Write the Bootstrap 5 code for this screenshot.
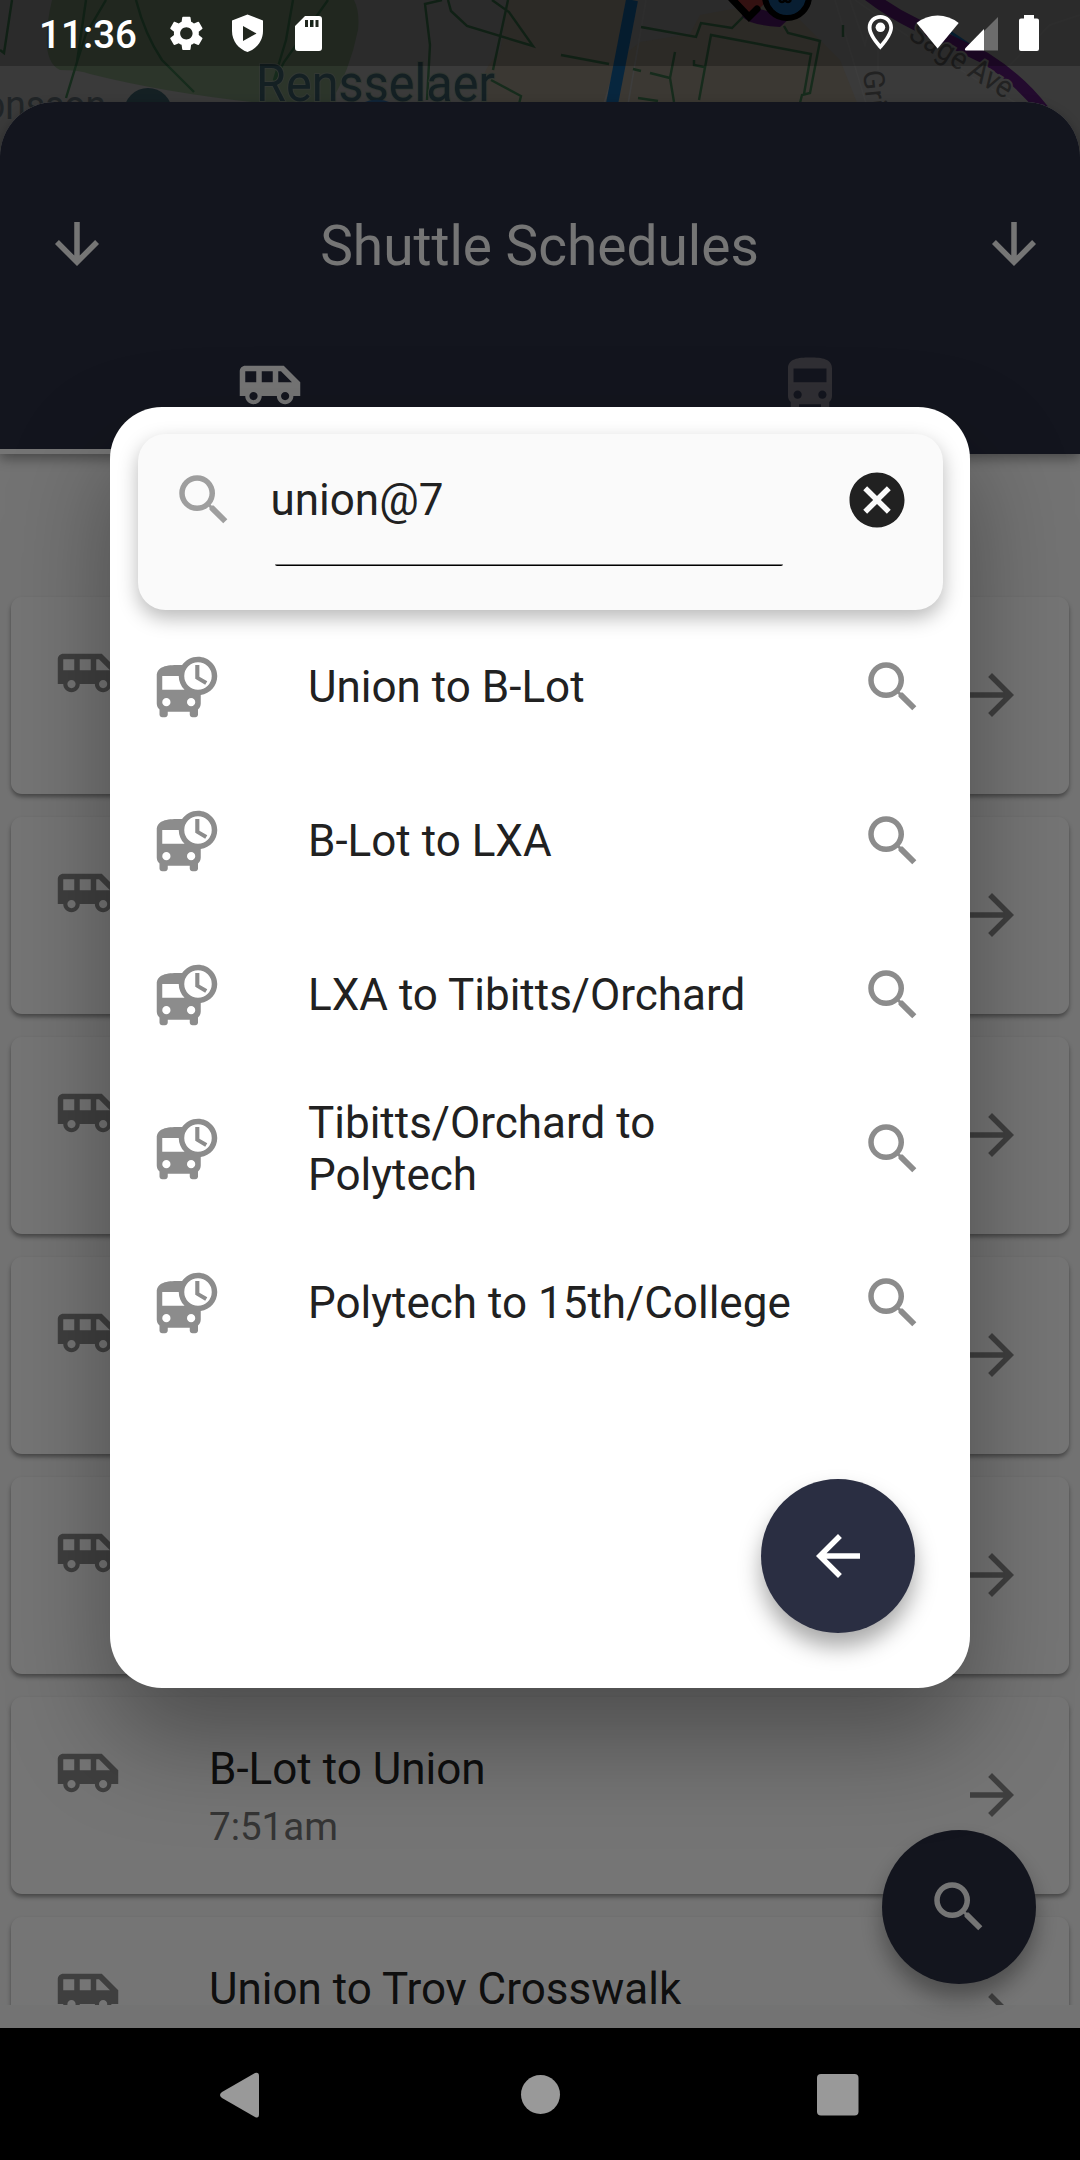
<!DOCTYPE html>
<html lang="en">
<head>
<meta charset="utf-8">
<meta name="viewport" content="width=device-width, initial-scale=1">
<title>Shuttle Schedules</title>
<link href="https://cdn.jsdelivr.net/npm/bootstrap@5.3.0/dist/css/bootstrap.min.css" rel="stylesheet">
<style>
body{font-family:Roboto,"Liberation Sans",sans-serif;background:#000;overflow:hidden;color:#212121}
.phone{width:1080px;height:2160px}
.screen{height:2028px;background:#fafafa}
.ico{width:66px;height:66px;fill:currentColor;flex:none;display:block}
.map-strip{height:160px;flex:none;display:block}
.map-strip text{font-family:Roboto,sans-serif}
.sheet{margin-top:-58.5px;background:#fafafa;border-radius:55px 55px 0 0}
.sheet-head{height:352px;padding-top:65.5px;background:#2a2f42;border-radius:55px 55px 0 0;box-shadow:0 5px 12px rgba(0,0,0,.35);color:#fff;flex:none}
.title-bar{height:154px;padding:0 33px 0 44px}
.title-text{font-size:55px;line-height:64px;padding-top:3px;margin-right:12px}
.tab-cell{height:132.5px;padding-bottom:0;border-bottom:5.5px solid transparent}
.tab-on{border-color:#fff}
.tab-off{color:#6a6771}
.stops{padding:143px 11px 0;gap:22.5px;height:1551px}
.stop{height:197.5px;flex:none;border-radius:11px;background:#fff;box-shadow:0 3px 4px rgba(0,0,0,.38);padding:43.5px 44px 0}
.stop .ico{color:#8a8a8a}
.stop-text{padding-left:88px}
.stop-name{font-size:44px;line-height:52px;margin-top:2.5px;color:#212121}
.stop-time{font-size:38.5px;line-height:45px;margin-top:9px;color:#737373}
.stop .go{margin-top:22px}
.round-btn{width:154px;height:154px;background:#2a2e42;color:#fff;box-shadow:0 14px 22px rgba(0,0,0,.34)}
.find-btn{right:44px;bottom:44px}
.veil{background:rgba(0,0,0,.54);padding:66px 110px 0;height:2028px;z-index:2}
.dialog-box{height:1281px;margin-top:340.5px;background:#fff;border-radius:52px;box-shadow:0 50px 100px rgba(0,0,0,.34);padding:27.5px 0 55px}
.search-card{height:176px;margin:0 27.5px;flex:none;background:#fafafa;border-radius:27.5px;box-shadow:0 8px 20px rgba(0,0,0,.28);padding:33px 33px 0}
.search-card .lens{color:#9e9e9e}
.field{margin:0 60px 0 34px}
.field-text{font-size:44px;line-height:66px;color:#212121}
.field-line{height:2px;margin:31px 1px 0 4px;background:linear-gradient(#777 50%,#000 50%);border-radius:0 0 4px 4px}
.hit{height:154px;padding:0 44px;color:#8c8c8c}
.hit-name{font-size:44px;line-height:52px;color:#212121;padding-left:88px;padding-right:44px}
.back-btn{margin-right:55px}
.status{height:66px;background:rgba(0,0,0,.25);z-index:3}
.clock-text{font-size:38.5px;font-weight:500;fill:#fff;font-family:Roboto,sans-serif}
.navkeys{height:132px;background:#000}
</style>
</head>
<body>
<svg class="d-none" xmlns="http://www.w3.org/2000/svg">
<symbol id="van" viewBox="0 0 24 24"><path d="M17 5H3c-1.1 0-2 .89-2 2v9h2c0 1.65 1.34 3 3 3s3-1.35 3-3h5.5c0 1.65 1.34 3 3 3s3-1.35 3-3H23v-5l-6-6zM3 11V7h4v4H3zm3 6.5c-.83 0-1.5-.67-1.5-1.5s.67-1.5 1.5-1.5 1.5.67 1.5 1.5-.67 1.5-1.5 1.5zm7-6.5H9V7h4v4zm4.5 6.5c-.83 0-1.5-.67-1.5-1.5s.67-1.5 1.5-1.5 1.5.67 1.5 1.5-.67 1.5-1.5 1.5zM15 11V7h1l4 4h-5z"/></symbol>
<symbol id="bus" viewBox="0 0 24 24"><path d="M4 16c0 .88.39 1.67 1 2.22V20c0 .55.45 1 1 1h1c.55 0 1-.45 1-1v-1h8v1c0 .55.45 1 1 1h1c.55 0 1-.45 1-1v-1.78c.61-.55 1-1.34 1-2.22V6c0-3.5-3.58-4-8-4s-8 .5-8 4v10zm3.500 1c-.83 0-1.500-.67-1.500-1.500S6.670 14 7.500 14s1.500.67 1.500 1.500S8.330 17 7.500 17zm9 0c-.83 0-1.500-.67-1.500-1.500s.67-1.500 1.500-1.500 1.500.67 1.500 1.500-.67 1.500-1.500 1.500zm1.500-6H6V6h12v5z"/></symbol>
<symbol id="board" viewBox="0 0 24 24"><path fill-rule="evenodd" d="M16 1c-2.400 0-4.520 1.210-5.780 3.020C9.840 4 9.420 4 9 4c-4.420 0-8 .5-8 4v10c0 .88.39 1.67 1 2.22V22c0 .55.45 1 1 1h1c.55 0 1-.45 1-1v-1h8v1c0 .55.45 1 1 1h1c.55 0 1-.45 1-1v-1.780c.61-.55 1-1.340 1-2.220v-3.080c3.390-.49 6-3.390 6-6.920 0-3.870-3.130-7-7-7zM4.500 19a1.500 1.500 0 1 1 0-3 1.500 1.500 0 0 1 0 3zM3 13V8h6c0 1.960.81 3.730 2.110 5H3zm10.500 6a1.500 1.500 0 1 1 0-3 1.500 1.500 0 0 1 0 3zM16 13a5 5 0 1 1 0-10 5 5 0 0 1 0 10zM16.500 4H15v5l3.620 2.160.75-1.230-2.870-1.680V4z"/></symbol>
<symbol id="lens" viewBox="0 0 24 24"><path d="M15.500 14h-.79l-.28-.27A6.471 6.471 0 0 0 16 9.500 6.500 6.500 0 1 0 9.500 16c1.610 0 3.090-.59 4.230-1.570l.27.28v.79l5 4.990L20.490 19l-4.990-5zm-6 0C7.010 14 5 11.990 5 9.500S7.010 5 9.500 5 14 7.010 14 9.500 11.990 14 9.500 14z"/></symbol>
<symbol id="down" viewBox="0 0 24 24"><path d="M20 12l-1.410-1.410L13 16.170V4h-2v12.170l-5.580-5.590L4 12l8 8 8-8z"/></symbol>
<symbol id="next" viewBox="0 0 24 24"><path d="M12 4l-1.410 1.410L16.170 11H4v2h12.170l-5.580 5.590L12 20l8-8z"/></symbol>
<symbol id="back" viewBox="0 0 24 24"><path d="M20 11H7.830l5.590-5.590L12 4l-8 8 8 8 1.410-1.410L7.830 13H20v-2z"/></symbol>
<symbol id="clear" viewBox="0 0 24 24"><path d="M12 2C6.470 2 2 6.470 2 12s4.470 10 10 10 10-4.470 10-10S17.530 2 12 2zm5 13.590L15.590 17 12 13.410 8.410 17 7 15.590 10.590 12 7 8.410 8.410 7 12 10.590 15.590 7 17 8.410 13.410 12 17 15.590z"/></symbol>
</svg>

<div class="phone position-relative d-flex flex-column">
  <div class="screen position-relative d-flex flex-column overflow-hidden">
    <svg class="map-strip" width="1080" height="160" viewBox="0 0 1080 160">
      <rect width="1080" height="160" fill="#7e7e7e"/>
      <path d="M52 0Q38 60 60 70Q80 70 90 74Q170 94 270 104H330Q350 70 358 30Q360 12 354 0z" fill="#60735d"/>
      <path d="M508 0H626L606 110H490Q470 80 500 52zM700 15L780 0 840 60 860 110H606L618 60 640 42 690 34z" fill="#807a6f"/>
      <path d="M630 20L602 110M646 0L627 110M835 0L868 110M850 0l15 45 5-20M878 20v50M855 0Q940 60 1018 104M1000 75L1050 25 1080 15" fill="none" stroke="#868686" stroke-width="1.500"/>
      <g fill="none" stroke="#305e3d" stroke-width="2.400">
        <path d="M12 0L4 53l-4-3M86 0L77 62 66 98M106 0L86 34 77 62M136 0Q145 35 162 60L194 92M293 0L286 40 274 80M328 0L284 62 272 86M442 0L425 4 430 45 427 100M448 0l3 11 16 15 66 20L509 12 492 0M508 0L493 70M491 80l30 16-2 8M561 55l48 9M641 27l55 10 5-14 31 5 12-12M675 52l-5 26 4 24M694 60v5l10 2M633 69l8 2M650 73l20 5M638 98l20 3M699 100l12-65 100 19-7 40M784 26l4 7 32 8-10 52-8 2-2 8M843 25v12"/>
      </g>
      <path d="M632 0L612 104" stroke="#115387" stroke-width="12" fill="none"/>
      <path d="M944 28l30 20" stroke="#115387" stroke-width="3"/>
      <path d="M867-6Q890 12 915 24L985 58Q1020 80 1043 110" stroke="#4c1664" stroke-width="12" fill="none"/>
      <path d="M742 16Q748 25 780 27L790 18 750 6z" fill="#4c1664"/>
      <path d="M732 0L749 17 759 9 768 0z" fill="#953333"/>
      <path d="M731-2L749 17 757 9" fill="none" stroke="#000" stroke-width="7" stroke-linecap="round"/>
      <circle cx="787" cy="-4" r="22" fill="#1a5a93" stroke="#000" stroke-width="6"/>
      <path d="M779 0q3 4 6 0q3 4 6 0" stroke="#000" stroke-width="2.500" fill="none"/>
      <circle cx="148" cy="112" r="24" fill="#2c464e"/>
      <text x="256" y="101" font-size="51.500" fill="#2c464e" stroke="#6f7b6f" stroke-width="2" paint-order="stroke" textLength="239" lengthAdjust="spacingAndGlyphs">Rensselaer</text>
      <text x="-16" y="119" font-size="41" fill="#475055" textLength="122" lengthAdjust="spacingAndGlyphs">onsson</text>
      <text font-size="31" fill="#4a4a4a" stroke="#7e7e7e" stroke-width="4" paint-order="stroke" transform="translate(907 38) rotate(32)" textLength="116" lengthAdjust="spacingAndGlyphs">Sage Ave</text>
      <text font-size="29" fill="#4a4a4a" transform="translate(863 71) rotate(84)">Griswold</text>
      <path d="M362 103q15-7 30 0z" fill="#24507c"/>
    </svg>
    <div class="sheet position-relative d-flex flex-column">
      <header class="sheet-head position-relative z-1">
        <div class="title-bar d-flex align-items-center justify-content-between">
          <svg class="ico"><use href="#down"/></svg>
          <div class="title-text">Shuttle Schedules</div>
          <svg class="ico"><use href="#down"/></svg>
        </div>
        <div class="row g-0">
          <div class="col-6 tab-cell tab-on d-flex justify-content-center align-items-center"><svg class="ico"><use href="#van"/></svg></div>
          <div class="col-6 tab-cell tab-off d-flex justify-content-center align-items-center"><svg class="ico"><use href="#bus"/></svg></div>
        </div>
      </header>
      <main class="stops d-flex flex-column overflow-hidden">
        <div class="stop d-flex align-items-start"><svg class="ico"><use href="#van"/></svg><svg class="ico go ms-auto"><use href="#next"/></svg></div>
        <div class="stop d-flex align-items-start"><svg class="ico"><use href="#van"/></svg><svg class="ico go ms-auto"><use href="#next"/></svg></div>
        <div class="stop d-flex align-items-start"><svg class="ico"><use href="#van"/></svg><svg class="ico go ms-auto"><use href="#next"/></svg></div>
        <div class="stop d-flex align-items-start"><svg class="ico"><use href="#van"/></svg><svg class="ico go ms-auto"><use href="#next"/></svg></div>
        <div class="stop d-flex align-items-start"><svg class="ico"><use href="#van"/></svg><svg class="ico go ms-auto"><use href="#next"/></svg></div>
        <div class="stop d-flex align-items-start"><svg class="ico"><use href="#van"/></svg>
          <div class="stop-text flex-grow-1"><div class="stop-name">B-Lot to Union</div><div class="stop-time">7:51am</div></div>
          <svg class="ico go"><use href="#next"/></svg></div>
        <div class="stop d-flex align-items-start"><svg class="ico"><use href="#van"/></svg>
          <div class="stop-text flex-grow-1"><div class="stop-name">Union to Troy Crosswalk</div></div>
          <svg class="ico go"><use href="#next"/></svg></div>
      </main>
    </div>
    <div class="round-btn find-btn position-absolute rounded-circle d-flex align-items-center justify-content-center z-1"><svg class="ico"><use href="#lens"/></svg></div>

    <div class="veil position-absolute top-0 start-0 w-100">
      <section class="dialog-box d-flex flex-column">
        <div class="search-card d-flex align-items-start">
          <svg class="ico lens"><use href="#lens"/></svg>
          <div class="field flex-grow-1"><div class="field-text">union@7</div><div class="field-line"></div></div>
          <svg class="ico"><use href="#clear"/></svg>
        </div>
        <div class="flex-grow-1">
          <div class="hit d-flex align-items-center"><svg class="ico"><use href="#board"/></svg><div class="hit-name flex-grow-1">Union to B-Lot</div><svg class="ico"><use href="#lens"/></svg></div>
          <div class="hit d-flex align-items-center"><svg class="ico"><use href="#board"/></svg><div class="hit-name flex-grow-1">B-Lot to LXA</div><svg class="ico"><use href="#lens"/></svg></div>
          <div class="hit d-flex align-items-center"><svg class="ico"><use href="#board"/></svg><div class="hit-name flex-grow-1">LXA to Tibitts/Orchard</div><svg class="ico"><use href="#lens"/></svg></div>
          <div class="hit d-flex align-items-center"><svg class="ico"><use href="#board"/></svg><div class="hit-name flex-grow-1">Tibitts/Orchard to Polytech</div><svg class="ico"><use href="#lens"/></svg></div>
          <div class="hit d-flex align-items-center"><svg class="ico"><use href="#board"/></svg><div class="hit-name flex-grow-1">Polytech to 15th/College</div><svg class="ico"><use href="#lens"/></svg></div>
        </div>
        <div class="round-btn back-btn rounded-circle d-flex align-items-center justify-content-center align-self-end flex-shrink-0"><svg class="ico"><use href="#back"/></svg></div>
      </section>
    </div>

    <svg class="status position-absolute top-0 start-0 w-100" viewBox="0 0 1080 66" fill="#fff">
      <text class="clock-text" x="39" y="48" textLength="98">11:36</text>
      <path transform="translate(165.600 12.600) scale(1.730)" d="M19.140 12.940c.04-.3.06-.61.06-.94 0-.32-.02-.64-.07-.94l2.030-1.580a.49.49 0 0 0 .12-.61l-1.920-3.320a.488.488 0 0 0-.59-.22l-2.390.96c-.5-.38-1.030-.7-1.620-.94l-.36-2.540a.484.484 0 0 0-.48-.41h-3.840c-.24 0-.43.17-.47.41l-.36 2.540c-.59.24-1.130.57-1.620.94l-2.390-.96c-.22-.08-.47 0-.59.22L2.740 8.870c-.12.21-.08.47.12.61l2.030 1.580c-.05.3-.09.63-.09.94s.02.64.07.94l-2.030 1.580a.49.49 0 0 0-.12.61l1.920 3.320c.12.22.37.29.59.22l2.390-.96c.5.38 1.030.7 1.620.94l.36 2.540c.05.24.24.41.48.41h3.840c.24 0 .44-.17.47-.41l.36-2.540c.59-.24 1.130-.56 1.620-.94l2.390.96c.22.08.47 0 .59-.22l1.920-3.320c.12-.22.07-.47-.12-.61l-2.010-1.580zM12 15.600c-1.980 0-3.600-1.620-3.600-3.600s1.620-3.600 3.600-3.600 3.600 1.620 3.600 3.600-1.620 3.600-3.600 3.600z"/>
      <path fill-rule="evenodd" d="M247.500 14.500L232 20.500V31c0 10 6.500 18 15.500 21 9-3 15.500-11 15.500-21V20.500zM243 26v15l13.500-7.500z"/>
      <path fill-rule="evenodd" d="M305 16h14q3 0 3 3v29q0 3-3 3h-21q-3 0-3-3V26zM305 20v7h3v-7zM310 20v7h3.500v-7zM315.500 20v7h3v-7z"/>
      <path fill-rule="evenodd" d="M880.400 15c-7 0-12.700 5.500-12.700 12.400C867.700 36.500 880.400 49.500 880.400 49.500S893 36.500 893 27.400C893 20.500 887.400 15 880.400 15zM880.400 18.700c5 0 8.900 3.900 8.900 8.700 0 5-4.500 11.500-8.900 16.500-4.400-5-8.900-11.500-8.900-16.500 0-4.800 3.900-8.700 8.900-8.700z"/>
      <circle cx="880.400" cy="27.300" r="4.800"/>
      <path d="M937.600 48.500L916.600 23Q926 15.500 937.600 15.500T958.700 23z"/>
      <path d="M998 17v33.500h-14V31z" fill="#6c6c6c"/><path d="M984 29v21.500h-18q-2-.5-.5-2.500z"/>
      <path d="M1024 15h10v3.500h3q2 0 2 2V49q0 2-2 2h-16q-2 0-2-2V20.500q0-2 2-2h3z"/>
    </svg>
  </div>
  <svg class="navkeys" width="1080" height="132" viewBox="0 0 1080 132" fill="#999">
    <path d="M222 64L255 45Q259 44 259 48V86Q259 91 255 89L222 70Q218 67 222 64z"/>
    <circle cx="540.500" cy="66.500" r="19.500"/>
    <rect x="817" y="46" width="41.500" height="41.500" rx="4"/>
  </svg>
</div>
<script src="https://cdn.jsdelivr.net/npm/bootstrap@5.3.0/dist/js/bootstrap.bundle.min.js"></script>
</body>
</html>
